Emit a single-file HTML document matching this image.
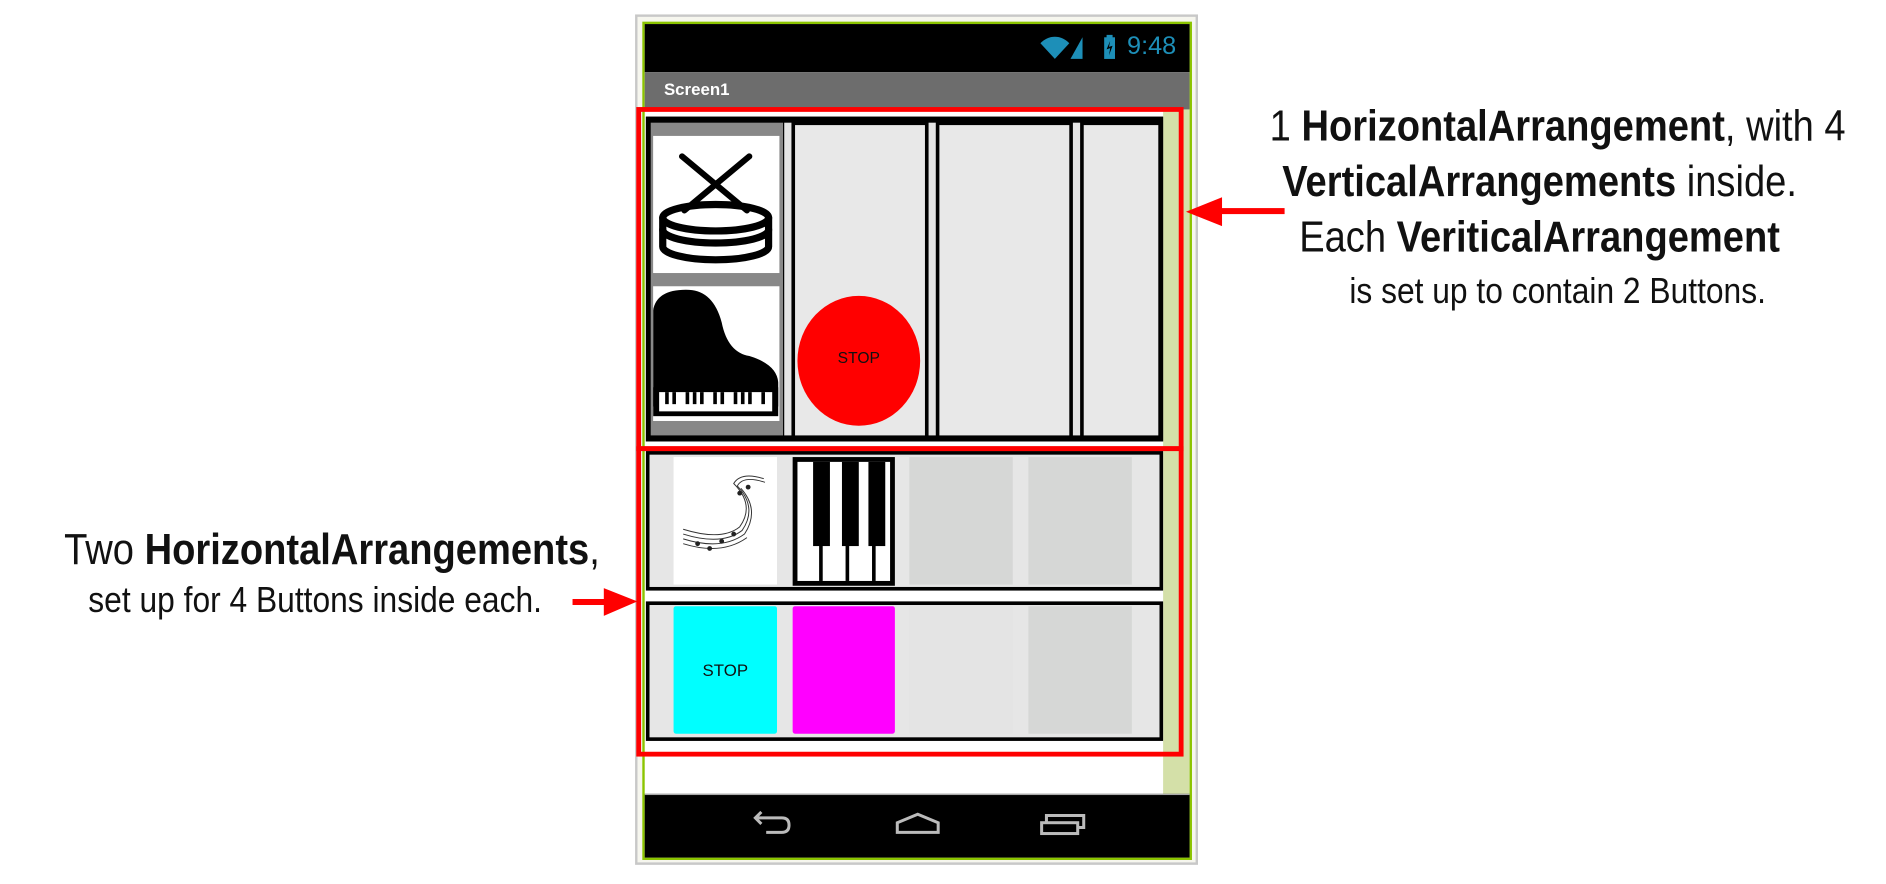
<!DOCTYPE html>
<html><head><meta charset="utf-8"><style>
html,body{margin:0;padding:0;background:#fff;width:1886px;height:884px;overflow:hidden}
#s{position:absolute;left:0;top:0;width:1568px;height:735px;transform:scale(1.2028);transform-origin:0 0;font-family:"Liberation Sans",Arial,sans-serif}
.a{position:absolute;box-sizing:border-box}
.t{position:absolute;white-space:nowrap;transform-origin:center top;text-align:center;color:#111}
.big{font-size:36px;transform:scaleX(0.88)}
.sm{font-size:30px;transform:scaleX(0.88)}
b{font-weight:bold}
</style></head><body><div id="s">
<div class="a" style="left:528px;top:12px;width:468px;height:707px;border:2px solid #c8c8c8;background:#f6f6ee"></div>
<div class="a" style="left:534px;top:18px;width:457px;height:697px;border:2px solid #8bc400;background:#fff"></div>
<div class="a" style="left:536px;top:20px;width:453px;height:40px;background:#000"></div>
<svg class="a" style="left:862px;top:26px" width="80" height="26" viewBox="0 0 80 26">
<path d="M3 10 A16 16 0 0 1 27 10 L15 23Z" fill="#1d8fb8"/>
<path d="M28 23 L38 23 L38 5Z" fill="#1d8fb8"/>
<rect x="56" y="5" width="9" height="18" fill="#1d8fb8"/><rect x="58" y="3" width="5" height="3" fill="#1d8fb8"/>
<path d="M61 8 L58 15 L61 14 L60 20 L63 12 L60 13Z" fill="#000"/>
</svg>
<div style="position:absolute;left:937px;top:27px;color:#1d8fb8;font-size:21px">9:48</div>
<div class="a" style="left:536px;top:60px;width:453px;height:31px;background:#6d6d6d"></div>
<div style="position:absolute;left:552px;top:66px;color:#fff;font-weight:bold;font-size:14px">Screen1</div>
<div class="a" style="left:967px;top:91px;width:22px;height:569px;background:#d4e0a8"></div>
<div class="a" style="left:537px;top:97px;width:430px;height:270px;border:4px solid #000;background:#000"></div>
<div class="a" style="left:541px;top:102px;width:110px;height:260px;background:#888"></div>
<div class="a" style="left:543px;top:113px;width:105px;height:114px;background:#fff"></div>
<svg class="a" style="left:543px;top:113px" width="105" height="114" viewBox="0 0 105 114">
<g stroke="#000" stroke-linecap="round" fill="none">
<line x1="24" y1="17" x2="78" y2="62" stroke-width="5"/><line x1="80" y1="17" x2="26" y2="62" stroke-width="5"/>
<ellipse cx="52" cy="68" rx="44" ry="11" stroke-width="6"/>
<path d="M8 68 V92 A44 11 0 0 0 96 92 V68" stroke-width="6"/>
<path d="M8 78 A44 11 0 0 0 96 78" stroke-width="6"/>
</g></svg>
<div class="a" style="left:543px;top:238px;width:105px;height:112px;background:#fff"></div>
<svg class="a" style="left:543px;top:238px" width="105" height="112" viewBox="0 0 105 112">
<path d="M0 100 V20 Q3 2 30 3 Q50 4 57 30 Q62 55 80 58 Q103 65 104 80 V100Z" fill="#000"/>
<rect x="0" y="84" width="104" height="24" fill="#000"/>
<rect x="5" y="88" width="94" height="16" fill="#fff"/>
<g fill="#000"><rect x="10" y="88" width="3" height="10"/><rect x="16" y="88" width="3" height="10"/><rect x="27" y="88" width="3" height="10"/><rect x="33" y="88" width="3" height="10"/><rect x="39" y="88" width="3" height="10"/><rect x="50" y="88" width="3" height="10"/><rect x="56" y="88" width="3" height="10"/><rect x="67" y="88" width="3" height="10"/><rect x="73" y="88" width="3" height="10"/><rect x="79" y="88" width="3" height="10"/><rect x="90" y="88" width="3" height="10"/></g>
</svg>
<div class="a" style="left:652px;top:102px;width:6px;height:260px;background:#e4e4e4"></div>
<div class="a" style="left:661px;top:104px;width:108px;height:258px;background:#e8e8e8"></div>
<div class="a" style="left:772px;top:102px;width:6px;height:260px;background:#e4e4e4"></div>
<div class="a" style="left:781px;top:104px;width:108px;height:258px;background:#e8e8e8"></div>
<div class="a" style="left:892px;top:102px;width:6px;height:260px;background:#e4e4e4"></div>
<div class="a" style="left:901px;top:104px;width:62px;height:258px;background:#e8e8e8"></div>
<div class="a" style="left:663px;top:246px;width:102px;height:108px;border-radius:50%;background:#f00"></div>
<div style="position:absolute;left:663px;top:290px;width:102px;text-align:center;font-size:13px;color:#111">STOP</div>
<div class="a" style="left:537px;top:375px;width:430px;height:116px;border:3px solid #000;background:#e6e6e6"></div>
<div class="a" style="left:560px;top:380px;width:86px;height:106px;background:#fff"></div>
<svg class="a" style="left:560px;top:380px" width="86" height="106" viewBox="0 0 86 106">
<g stroke="#333" fill="none" stroke-width="0.8">
<path d="M8 60 Q40 70 55 58 Q68 40 50 22 Q56 12 75 18"/><path d="M8 64 Q40 74 57 61 Q70 42 53 24 Q58 15 76 21"/><path d="M8 68 Q40 78 59 64 Q72 44 56 26"/><path d="M8 72 Q40 82 61 67"/></g>
<g fill="#222"><circle cx="20" cy="72" r="2"/><circle cx="30" cy="76" r="2"/><circle cx="40" cy="70" r="2"/><circle cx="50" cy="64" r="2"/><circle cx="55" cy="30" r="2"/><circle cx="62" cy="25" r="2"/></g>
</svg>
<div class="a" style="left:659px;top:380px;width:85px;height:107px;background:#000"></div>
<svg class="a" style="left:659px;top:380px" width="85" height="107" viewBox="0 0 85 107">
<rect x="4" y="4" width="77" height="99" fill="#fff"/>
<g fill="#000"><rect x="17" y="4" width="14" height="70"/><rect x="41" y="4" width="14" height="70"/><rect x="63" y="4" width="14" height="70"/>
<rect x="22" y="70" width="3" height="33"/><rect x="44" y="70" width="3" height="33"/><rect x="66" y="70" width="3" height="33"/></g>
</svg>
<div class="a" style="left:756px;top:380px;width:86px;height:106px;background:#d6d7d6"></div>
<div class="a" style="left:855px;top:380px;width:86px;height:106px;background:#d6d7d6"></div>
<div class="a" style="left:537px;top:500px;width:430px;height:116px;border:3px solid #000;background:#e6e6e6"></div>
<div class="a" style="left:560px;top:504px;width:86px;height:106px;background:#0ff;border-radius:2px"></div>
<div style="position:absolute;left:560px;top:549px;width:86px;text-align:center;font-size:14px;color:#111">STOP</div>
<div class="a" style="left:659px;top:504px;width:85px;height:106px;background:#f0f;border-radius:2px"></div>
<div class="a" style="left:756px;top:504px;width:86px;height:106px;background:#e4e4e4"></div>
<div class="a" style="left:855px;top:504px;width:86px;height:106px;background:#d6d7d6"></div>
<div class="a" style="left:529px;top:89px;width:455px;height:286px;border:4px solid #f00"></div>
<div class="a" style="left:529px;top:371px;width:455px;height:258px;border:4px solid #f00"></div>
<div class="a" style="left:536px;top:660px;width:453px;height:53px;background:#000;border-top:1px solid #aaa"></div>
<svg class="a" style="left:536px;top:660px" width="453" height="53" viewBox="0 0 453 53">
<g stroke="#bbb" stroke-width="2.5" fill="none">
<path d="M92 20 H114 Q120 20 120 26 Q120 32 114 32 H101"/><path d="M97 15 L92 20 L97 25"/>
<path d="M210 32 V24 L227 17 L244 24 V32Z"/>
<rect x="330" y="24" width="30" height="9"/><path d="M334 24 V18 H365 V28 H360"/>
</g></svg>
<div class="t big" style="left:1025px;top:84px;width:510px">1 <b>HorizontalArrangement</b>, with 4</div>
<div class="t big" style="left:1025px;top:130px;width:510px"><b>VerticalArrangements</b> inside.</div>
<div class="t big" style="left:1025px;top:176px;width:510px">Each <b>VeriticalArrangement</b></div>
<div class="t sm" style="left:1040px;top:226px;width:510px">is set up to contain 2 Buttons.</div>
<svg class="a" style="left:984px;top:160px" width="90" height="32"><rect x="28" y="13" width="56" height="5" fill="#f00"/><path d="M2 16 L32 4 L32 28Z" fill="#f00"/></svg>
<div class="t big" style="left:16px;top:436px;width:520px">Two <b>HorizontalArrangements</b>,</div>
<div class="t sm" style="left:2px;top:483px;width:520px">set up for 4 Buttons inside each.</div>
<svg class="a" style="left:474px;top:486px" width="60" height="30"><rect x="2" y="12" width="30" height="5" fill="#f00"/><path d="M56 14 L28 3 L28 26Z" fill="#f00"/></svg>
</div></body></html>
